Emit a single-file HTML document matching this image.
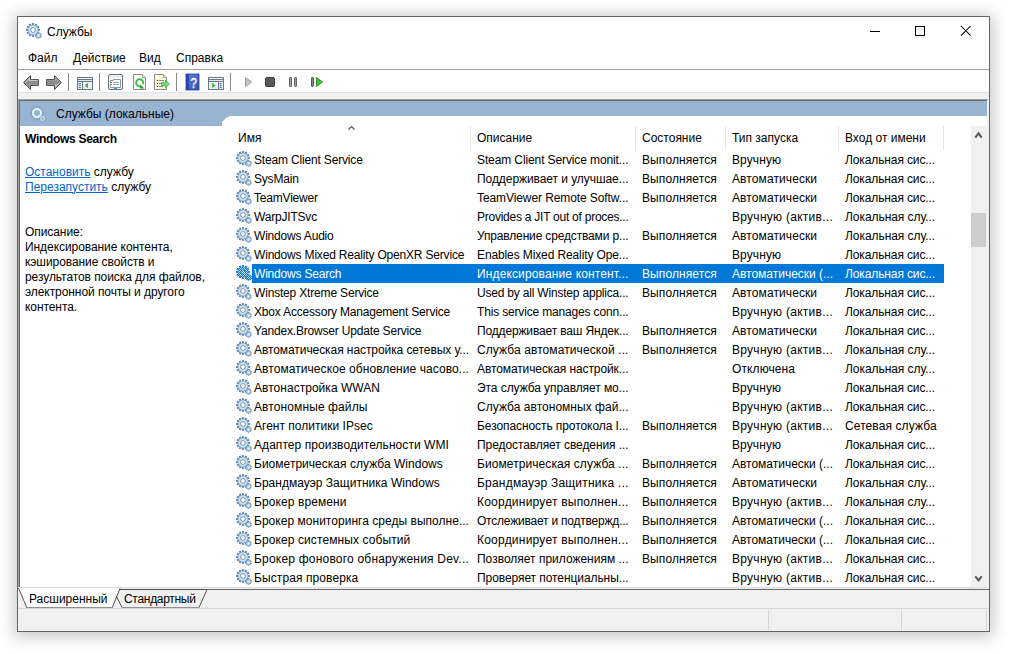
<!DOCTYPE html>
<html><head><meta charset="utf-8">
<style>
html,body{margin:0;padding:0;width:1011px;height:654px;overflow:hidden;background:#fff;}
*{box-sizing:border-box;}
body{font-family:"Liberation Sans",sans-serif;font-size:12px;color:#000;position:relative;}
.a{position:absolute;}
.t{position:absolute;white-space:nowrap;line-height:15px;}
#win{position:absolute;left:17px;top:16px;width:973px;height:616px;border:1px solid #646464;background:#fff;
 box-shadow:0 2px 15px 3px rgba(0,0,0,0.22);}
.hl{position:absolute;height:1px;}
.vl{position:absolute;width:1px;}
.row{position:absolute;left:0;width:1011px;height:19px;}
.row .c{position:absolute;white-space:nowrap;line-height:19px;top:1px;}
.row.sel{color:#fff;}
.row.sel:before{content:"";position:absolute;left:252px;top:0;width:692px;height:19px;background:#0078d7;}
.gi{position:absolute;top:1px;width:16px;height:16px;}
a,.lnk{color:#0066cc;text-decoration:underline;}

</style></head><body>
<svg width="0" height="0" style="position:absolute">
<defs>
<pattern id="dith" width="2" height="2" patternUnits="userSpaceOnUse"><rect x="0" y="0" width="1" height="1" fill="#0078d7"/><rect x="1" y="1" width="1" height="1" fill="#0078d7"/></pattern>
<radialGradient id="ring" cx="0.5" cy="0.5" r="0.5"><stop offset="0.45" stop-color="#e6f7fd"/><stop offset="0.78" stop-color="#bfe1f4"/><stop offset="1" stop-color="#7b9ec2"/></radialGradient>
<mask id="gmask" maskUnits="userSpaceOnUse" x="0" y="0" width="16" height="16"><g fill="#fff"><rect x="5.9" y="0.1" width="2.2" height="2.6" transform="rotate(0 7 7)"/><rect x="5.9" y="0.1" width="2.2" height="2.6" transform="rotate(30 7 7)"/><rect x="5.9" y="0.1" width="2.2" height="2.6" transform="rotate(60 7 7)"/><rect x="5.9" y="0.1" width="2.2" height="2.6" transform="rotate(90 7 7)"/><rect x="5.9" y="0.1" width="2.2" height="2.6" transform="rotate(120 7 7)"/><rect x="5.9" y="0.1" width="2.2" height="2.6" transform="rotate(150 7 7)"/><rect x="5.9" y="0.1" width="2.2" height="2.6" transform="rotate(180 7 7)"/><rect x="5.9" y="0.1" width="2.2" height="2.6" transform="rotate(210 7 7)"/><rect x="5.9" y="0.1" width="2.2" height="2.6" transform="rotate(240 7 7)"/><rect x="5.9" y="0.1" width="2.2" height="2.6" transform="rotate(270 7 7)"/><rect x="5.9" y="0.1" width="2.2" height="2.6" transform="rotate(300 7 7)"/><rect x="5.9" y="0.1" width="2.2" height="2.6" transform="rotate(330 7 7)"/><circle cx="7" cy="7" r="5.3"/><rect x="11.95" y="9.3" width="1.1" height="1.5" transform="rotate(0 12.5 12.5)"/><rect x="11.95" y="9.3" width="1.1" height="1.5" transform="rotate(36 12.5 12.5)"/><rect x="11.95" y="9.3" width="1.1" height="1.5" transform="rotate(72 12.5 12.5)"/><rect x="11.95" y="9.3" width="1.1" height="1.5" transform="rotate(108 12.5 12.5)"/><rect x="11.95" y="9.3" width="1.1" height="1.5" transform="rotate(144 12.5 12.5)"/><rect x="11.95" y="9.3" width="1.1" height="1.5" transform="rotate(180 12.5 12.5)"/><rect x="11.95" y="9.3" width="1.1" height="1.5" transform="rotate(216 12.5 12.5)"/><rect x="11.95" y="9.3" width="1.1" height="1.5" transform="rotate(252 12.5 12.5)"/><rect x="11.95" y="9.3" width="1.1" height="1.5" transform="rotate(288 12.5 12.5)"/><rect x="11.95" y="9.3" width="1.1" height="1.5" transform="rotate(324 12.5 12.5)"/><circle cx="12.5" cy="12.5" r="2.6"/></g></mask>
<g id="gear">
 <g fill="#6688ae"><rect x="5.9" y="0.1" width="2.2" height="2.6" transform="rotate(0 7 7)"/><rect x="5.9" y="0.1" width="2.2" height="2.6" transform="rotate(30 7 7)"/><rect x="5.9" y="0.1" width="2.2" height="2.6" transform="rotate(60 7 7)"/><rect x="5.9" y="0.1" width="2.2" height="2.6" transform="rotate(90 7 7)"/><rect x="5.9" y="0.1" width="2.2" height="2.6" transform="rotate(120 7 7)"/><rect x="5.9" y="0.1" width="2.2" height="2.6" transform="rotate(150 7 7)"/><rect x="5.9" y="0.1" width="2.2" height="2.6" transform="rotate(180 7 7)"/><rect x="5.9" y="0.1" width="2.2" height="2.6" transform="rotate(210 7 7)"/><rect x="5.9" y="0.1" width="2.2" height="2.6" transform="rotate(240 7 7)"/><rect x="5.9" y="0.1" width="2.2" height="2.6" transform="rotate(270 7 7)"/><rect x="5.9" y="0.1" width="2.2" height="2.6" transform="rotate(300 7 7)"/><rect x="5.9" y="0.1" width="2.2" height="2.6" transform="rotate(330 7 7)"/></g>
 <circle cx="7" cy="7" r="5.3" fill="url(#ring)"/>
 <circle cx="7" cy="7" r="2.7" fill="#6c7d93"/>
 <circle cx="7" cy="7" r="1.9" fill="#fff"/>
 <g fill="#6d90b6"><rect x="11.95" y="9.3" width="1.1" height="1.5" transform="rotate(0 12.5 12.5)"/><rect x="11.95" y="9.3" width="1.1" height="1.5" transform="rotate(36 12.5 12.5)"/><rect x="11.95" y="9.3" width="1.1" height="1.5" transform="rotate(72 12.5 12.5)"/><rect x="11.95" y="9.3" width="1.1" height="1.5" transform="rotate(108 12.5 12.5)"/><rect x="11.95" y="9.3" width="1.1" height="1.5" transform="rotate(144 12.5 12.5)"/><rect x="11.95" y="9.3" width="1.1" height="1.5" transform="rotate(180 12.5 12.5)"/><rect x="11.95" y="9.3" width="1.1" height="1.5" transform="rotate(216 12.5 12.5)"/><rect x="11.95" y="9.3" width="1.1" height="1.5" transform="rotate(252 12.5 12.5)"/><rect x="11.95" y="9.3" width="1.1" height="1.5" transform="rotate(288 12.5 12.5)"/><rect x="11.95" y="9.3" width="1.1" height="1.5" transform="rotate(324 12.5 12.5)"/></g>
 <circle cx="12.5" cy="12.5" r="2.4" fill="#b8d6ec" stroke="#7597bf" stroke-width="0.7"/>
 <circle cx="12.5" cy="12.5" r="0.8" fill="#fff"/>
</g>
<g id="gears">
 <use href="#gear"/>
 <rect x="0" y="0" width="16" height="16" fill="url(#dith)" mask="url(#gmask)"/>
</g>
<g id="gearh">
 <g fill="#7390b5" opacity="0.75"><rect x="5.9" y="0.3" width="2.2" height="2.4" transform="rotate(0 7 7)"/><rect x="5.9" y="0.3" width="2.2" height="2.4" transform="rotate(30 7 7)"/><rect x="5.9" y="0.3" width="2.2" height="2.4" transform="rotate(60 7 7)"/><rect x="5.9" y="0.3" width="2.2" height="2.4" transform="rotate(90 7 7)"/><rect x="5.9" y="0.3" width="2.2" height="2.4" transform="rotate(120 7 7)"/><rect x="5.9" y="0.3" width="2.2" height="2.4" transform="rotate(150 7 7)"/><rect x="5.9" y="0.3" width="2.2" height="2.4" transform="rotate(180 7 7)"/><rect x="5.9" y="0.3" width="2.2" height="2.4" transform="rotate(210 7 7)"/><rect x="5.9" y="0.3" width="2.2" height="2.4" transform="rotate(240 7 7)"/><rect x="5.9" y="0.3" width="2.2" height="2.4" transform="rotate(270 7 7)"/><rect x="5.9" y="0.3" width="2.2" height="2.4" transform="rotate(300 7 7)"/><rect x="5.9" y="0.3" width="2.2" height="2.4" transform="rotate(330 7 7)"/></g>
 <circle cx="7" cy="7" r="4.0" fill="none" stroke="#d9f2fc" stroke-width="2.4"/>
 <circle cx="7" cy="7" r="2.6" fill="none" stroke="#8c95a3" stroke-width="0.7" stroke-dasharray="0.8 0.6"/>
 <g fill="#6d8bb2" opacity="0.8"><rect x="12.05" y="9.4" width="0.9" height="1.3" transform="rotate(0 12.5 12.5)"/><rect x="12.05" y="9.4" width="0.9" height="1.3" transform="rotate(36 12.5 12.5)"/><rect x="12.05" y="9.4" width="0.9" height="1.3" transform="rotate(72 12.5 12.5)"/><rect x="12.05" y="9.4" width="0.9" height="1.3" transform="rotate(108 12.5 12.5)"/><rect x="12.05" y="9.4" width="0.9" height="1.3" transform="rotate(144 12.5 12.5)"/><rect x="12.05" y="9.4" width="0.9" height="1.3" transform="rotate(180 12.5 12.5)"/><rect x="12.05" y="9.4" width="0.9" height="1.3" transform="rotate(216 12.5 12.5)"/><rect x="12.05" y="9.4" width="0.9" height="1.3" transform="rotate(252 12.5 12.5)"/><rect x="12.05" y="9.4" width="0.9" height="1.3" transform="rotate(288 12.5 12.5)"/><rect x="12.05" y="9.4" width="0.9" height="1.3" transform="rotate(324 12.5 12.5)"/></g>
 <circle cx="12.5" cy="12.5" r="1.9" fill="none" stroke="#cde5f3" stroke-width="1.1"/>
</g>
</defs>
</svg>
<div id="win"></div>
<!-- title -->
<svg class="a" style="left:26px;top:23px;width:16px;height:16px"><use href="#gear"/></svg>
<div class="t" style="left:47px;top:24.5px;">Службы</div>
<svg class="a" style="left:865px;top:25px;width:120px;height:14px">
 <rect x="5" y="6" width="10" height="1" fill="#000"/>
 <rect x="50.5" y="1.5" width="9" height="9" fill="none" stroke="#000"/>
 <path d="M96 1 L105.6 10.6 M105.6 1 L96 10.6" stroke="#000" stroke-width="1.05"/>
</svg>
<!-- menu -->
<div class="t" style="left:28px;top:50.5px;">Файл</div>
<div class="t" style="left:73px;top:50.5px;">Действие</div>
<div class="t" style="left:139px;top:50.5px;">Вид</div>
<div class="t" style="left:176px;top:50.5px;">Справка</div>
<div class="hl" style="left:18px;top:69px;width:971px;background:#a0a0a0;"></div>
<!-- toolbar -->
<div class="hl" style="left:18px;top:92px;width:971px;background:#e3e3e3;"></div>
<div class="a" style="left:18px;top:93px;width:971px;height:6px;background:#f0f0f0;"></div>
<svg class="a" style="left:0;top:0;width:1011px;height:100px" viewBox="0 0 1011 100">
 <defs>
  <linearGradient id="arrG" x1="0" y1="0" x2="0" y2="1"><stop offset="0" stop-color="#b9b9b9"/><stop offset="0.5" stop-color="#8a8a8a"/><stop offset="1" stop-color="#a8a8a8"/></linearGradient>
  <linearGradient id="helpG" x1="0" y1="0" x2="1" y2="1"><stop offset="0" stop-color="#5a7fe0"/><stop offset="1" stop-color="#3552b8"/></linearGradient>
 </defs>
 <!-- back / forward -->
 <path d="M23.5 82.5 L30.5 75.5 L30.5 79.5 L38.5 79.5 L38.5 85.5 L30.5 85.5 L30.5 89.5 Z" fill="url(#arrG)" stroke="#555" stroke-width="1" stroke-linejoin="round"/>
 <path d="M25.5 82.5 L29.5 78.5 L29.5 80.5 L37.5 80.5" fill="none" stroke="#e8e8e8" stroke-width="0.8" opacity="0.8"/>
 <path d="M61.5 82.5 L54.5 75.5 L54.5 79.5 L46.5 79.5 L46.5 85.5 L54.5 85.5 L54.5 89.5 Z" fill="url(#arrG)" stroke="#555" stroke-width="1" stroke-linejoin="round"/>
 <path d="M59.5 82.5 L55.5 86.5 L55.5 84.5" fill="none" stroke="#e8e8e8" stroke-width="0.8" opacity="0.8"/>
 <!-- separators -->
 <rect x="68" y="73" width="1" height="18" fill="#8a8a8a"/>
 <rect x="99" y="73" width="1" height="18" fill="#8a8a8a"/>
 <rect x="176" y="73" width="1" height="18" fill="#8a8a8a"/>
 <rect x="230" y="73" width="1" height="18" fill="#8a8a8a"/>
  <!-- console tree icon -->
 <rect x="77.5" y="77.5" width="15" height="12" fill="#fff" stroke="#6b7583" stroke-width="1"/>
 <rect x="78" y="78" width="10" height="1" fill="#f4f6f8"/>
 <rect x="89" y="78" width="1" height="1" fill="#fff"/><rect x="91" y="78" width="1" height="1" fill="#fff"/>
 <rect x="78" y="79" width="14" height="1" fill="#6b7583"/>
 <rect x="78" y="80" width="14" height="1" fill="#e4e8ed"/>
 <rect x="78" y="81" width="14" height="1" fill="#6b7583"/>
 <rect x="82" y="82" width="1" height="7" fill="#6b7583"/>
 <rect x="78" y="82" width="4" height="7" fill="#fff"/>
 <rect x="78.5" y="83" width="2.5" height="1.3" rx="0.6" fill="#3b7dd0"/><rect x="78.5" y="85" width="2.5" height="1.3" rx="0.6" fill="#3b7dd0"/><rect x="78.5" y="87" width="2.5" height="1.3" rx="0.6" fill="#3b7dd0"/>
 <rect x="83" y="82" width="9" height="7" fill="#f0f0f0"/>
 <path d="M84.8 85.5 L88 82.8 L88 88.2 Z" fill="#2fb52f"/>
<!-- properties icon -->
 <rect x="108.5" y="74.5" width="14" height="15" rx="1.5" fill="#f7f8fa" stroke="#6a6f76" stroke-width="1"/>
 <rect x="109" y="76" width="13" height="1" fill="#dfe6ee"/>
 <path d="M110.5 80.5 L113.5 80.5 L113.5 79.5 L120.5 79.5 L120.5 87.5 L110.5 87.5 Z" fill="#fff" stroke="#8a97a6" stroke-width="1"/>
 <rect x="111" y="82" width="1" height="1" fill="#2a8ae0"/><rect x="113" y="82" width="6" height="1" fill="#9aa2aa"/>
 <rect x="111" y="84" width="1" height="1" fill="#888"/><rect x="113" y="84" width="6" height="1" fill="#9aa2aa"/>
 <rect x="114" y="88" width="3" height="1.5" fill="#2ea0f0"/>
 <!-- refresh icon -->
 <path d="M133.5 74.5 L142.5 74.5 L145.5 77.5 L145.5 89.5 L133.5 89.5 Z" fill="#fbfbfb" stroke="#8c8c8c" stroke-width="1"/>
 <path d="M142.5 74.5 L142.5 77.5 L145.5 77.5" fill="#e8e8e8" stroke="#8c8c8c" stroke-width="0.8"/>
 <path d="M142.9 84.2 A3.6 3.6 0 1 0 140.7 86.2" fill="none" stroke="#3cbf3c" stroke-width="1.9"/>
 <path d="M140 84.5 L144.5 88.5 L140 88.5 Z" fill="#2a9f2a"/>
 <!-- export list -->
 <path d="M154.5 74.5 L163.5 74.5 L166.5 77.5 L166.5 89.5 L154.5 89.5 Z" fill="#fdf7dc" stroke="#8c8c8c" stroke-width="1"/>
 <path d="M163.5 74.5 L163.5 77.5 L166.5 77.5" fill="#eee" stroke="#8c8c8c" stroke-width="0.8"/>
 <rect x="157" y="80" width="1" height="1" fill="#222"/><rect x="159" y="80" width="5" height="1" fill="#808890"/>
 <rect x="157" y="83" width="1" height="1" fill="#222"/><rect x="159" y="83" width="4" height="1" fill="#808890"/>
 <rect x="157" y="86" width="1" height="1" fill="#222"/><rect x="159" y="86" width="4" height="1" fill="#808890"/>
 <path d="M161.5 82.5 L165.5 82.5 L165.5 80 L169.5 84 L165.5 88 L165.5 85.5 L161.5 85.5 Z" fill="#7ad67a" stroke="#3fae3f" stroke-width="0.8"/>
 <!-- help -->
 <rect x="186" y="74" width="13" height="16" fill="url(#helpG)"/>
 <rect x="186" y="74" width="3" height="16" fill="#2c48b0"/>
 <rect x="186" y="74" width="13" height="16" fill="none" stroke="#233a90" stroke-width="0.8"/>
 <text x="193.6" y="87.6" font-family="Liberation Sans" font-size="14.5" fill="#fff" text-anchor="middle" stroke="#fff" stroke-width="0.4" transform="translate(193.6 0) scale(0.78 1) translate(-193.6 0)">?</text>
  <!-- action pane -->
 <rect x="208.5" y="77.5" width="15" height="12" fill="#fff" stroke="#6b7583" stroke-width="1"/>
 <rect x="209" y="78" width="10" height="1" fill="#f4f6f8"/>
 <rect x="220" y="78" width="1" height="1" fill="#fff"/><rect x="222" y="78" width="1" height="1" fill="#fff"/>
 <rect x="209" y="79" width="14" height="1" fill="#6b7583"/>
 <rect x="209" y="80" width="14" height="1" fill="#e4e8ed"/>
 <rect x="209" y="81" width="14" height="1" fill="#6b7583"/>
 <rect x="218" y="82" width="1" height="7" fill="#6b7583"/>
 <rect x="209" y="82" width="9" height="7" fill="#f0f0f0"/>
 <rect x="219" y="82" width="4" height="7" fill="#fff"/>
 <rect x="219.5" y="83" width="2.5" height="1.3" rx="0.6" fill="#3b7dd0"/><rect x="219.5" y="85" width="2.5" height="1.3" rx="0.6" fill="#3b7dd0"/><rect x="219.5" y="87" width="2.5" height="1.3" rx="0.6" fill="#3b7dd0"/>
 <path d="M212.2 82.8 L215.4 85.5 L212.2 88.2 Z" fill="#2fb52f"/>
<!-- play disabled -->
 <path d="M245.5 77.5 L251.5 82 L245.5 86.5 Z" fill="#c4c4c4" stroke="#9a9a9a" stroke-width="1" stroke-linejoin="round"/>
 <!-- stop -->
 <rect x="265.5" y="77.5" width="9" height="9" rx="1.5" fill="#5a5a5a" stroke="#3c3c3c" stroke-width="1"/>
 <!-- pause -->
 <rect x="289.5" y="77.5" width="2" height="9" rx="0.6" fill="#9a9a9a" stroke="#666" stroke-width="1"/>
 <rect x="294.5" y="77.5" width="2" height="9" rx="0.6" fill="#9a9a9a" stroke="#666" stroke-width="1"/>
 <!-- restart -->
 <rect x="311.5" y="77.5" width="2" height="9" rx="0.6" fill="#8a8a8a" stroke="#555" stroke-width="1"/>
 <path d="M316.5 77.5 L322.5 82 L316.5 86.5 Z" fill="#3cc43c" stroke="#2a9a2a" stroke-width="1" stroke-linejoin="round"/>
</svg>

<!-- MMC pane frame -->
<div class="a" style="left:18px;top:99px;width:971px;height:532px;background:#f0f0f0;"></div>
<div class="hl" style="left:18px;top:99px;width:970px;background:#a0a0a0;"></div>
<div class="hl" style="left:19px;top:100px;width:968px;background:#696969;"></div>
<div class="vl" style="left:18px;top:99px;height:488px;background:#a0a0a0;"></div>
<div class="vl" style="left:19px;top:100px;height:487px;background:#696969;"></div>
<div class="a" style="left:20px;top:101px;width:967px;height:487px;background:#fff;"></div>
<!-- blue header -->
<div class="a" style="left:20px;top:101px;width:967px;height:25px;background:#99b4d1;"></div>
<div class="a" style="left:222px;top:116px;width:765px;height:10px;background:#fff;clip-path:polygon(0 6px,1px 5px,4px 2px,6px 1px,8px 0,100% 0,100% 100%,0 100%);"></div>
<svg class="a" style="left:30px;top:106px;width:16px;height:16px"><use href="#gearh"/></svg>
<div class="t" style="left:56px;top:106.5px;">Службы (локальные)</div>
<!-- left panel -->
<div class="t" style="left:25px;top:131.5px;font-weight:bold;letter-spacing:-0.3px">Windows Search</div>
<div class="t" style="left:25px;top:164.5px;"><span class="lnk">Остановить</span> службу</div>
<div class="t" style="left:25px;top:179.5px;"><span class="lnk">Перезапустить</span> службу</div>
<div class="t" style="left:25px;top:224.5px;line-height:15px;letter-spacing:-0.07px">Описание:<br>Индексирование контента,<br>кэширование свойств и<br>результатов поиска для файлов,<br>электронной почты и другого<br>контента.</div>
<!-- list header -->
<div class="t" style="left:238px;top:130.5px;">Имя</div>
<div class="t" style="left:477px;top:130.5px">Описание</div>
<div class="t" style="left:642px;top:130.5px">Состояние</div>
<div class="t" style="left:732px;top:130.5px">Тип запуска</div>
<div class="t" style="left:845px;top:130.5px">Вход от имени</div>
<div class="vl" style="left:470px;top:126px;height:24px;background:#e5e5e5;"></div>
<div class="vl" style="left:635px;top:126px;height:24px;background:#e5e5e5;"></div>
<div class="vl" style="left:725px;top:126px;height:24px;background:#e5e5e5;"></div>
<div class="vl" style="left:838px;top:126px;height:24px;background:#e5e5e5;"></div>
<div class="vl" style="left:943px;top:126px;height:24px;background:#e5e5e5;"></div>
<svg class="a" style="left:346px;top:124px;width:12px;height:8px"><path d="M2.5 5.5 L5.5 2.5 L8.5 5.5" fill="none" stroke="#505050" stroke-width="1.1"/></svg>
<!-- scrollbar -->
<div class="a" style="left:971px;top:126px;width:16px;height:461px;background:#f0f0f0;"></div>
<div class="a" style="left:971px;top:213px;width:15px;height:34px;background:#cdcdcd;"></div>
<svg class="a" style="left:971px;top:126px;width:16px;height:17px"><path d="M4.3 11.7 L7.5 7.3 L10.7 11.7" fill="none" stroke="#5a5a5a" stroke-width="2"/></svg>
<svg class="a" style="left:971px;top:570px;width:16px;height:17px"><path d="M4.3 6.3 L7.5 10.3 L10.7 6.3" fill="none" stroke="#5a5a5a" stroke-width="2"/></svg>
<!-- tabs -->
<div class="hl" style="left:20px;top:587px;width:967px;background:#dcdcdc;"></div>
<svg class="a" style="left:18px;top:588px;width:971px;height:21px">
 <rect x="0" y="0" width="971" height="21" fill="#f0f0f0"/>
 <path d="M95 1.5 L971 1.5" stroke="#696969" stroke-width="1"/>
 <path d="M0 20.5 L971 20.5" stroke="#d7d7d7" stroke-width="1"/>
 <path d="M95 1.5 L189 1.5 L181 19.5 L104 19.5 Z" fill="#f0f0f0"/>
 <path d="M95 1.5 L189 1.5 M189 1.5 L181 19.5 M95 1.5 L104 19.5" fill="none" stroke="#505050" stroke-width="1"/>
 <path d="M104 19.5 L181 19.5" stroke="#909090" stroke-width="1"/>
 <path d="M0 0 L102 0 L94 19.5 L8 19.5 Z" fill="#fff"/>
 <path d="M0.5 0 L8.5 19" stroke="#505050" stroke-width="1" fill="none"/>
 <path d="M94.5 19 L102 0.5" stroke="#505050" stroke-width="1" fill="none"/>
 <path d="M8 19.5 L95 19.5" stroke="#909090" stroke-width="1"/>
</svg>
<div class="t" style="left:29px;top:591.5px;">Расширенный</div>
<div class="t" style="left:124px;top:591.5px;letter-spacing:-0.3px">Стандартный</div>
<!-- status bar -->
<div class="vl" style="left:768px;top:610px;height:20px;background:#d5d5d5;"></div>
<div class="vl" style="left:901px;top:610px;height:20px;background:#d5d5d5;"></div>
<div class="vl" style="left:986px;top:610px;height:20px;background:#d5d5d5;"></div>
<div id="list">
<div class="row" style="top:150px"><svg class="gi" style="left:236px"><use href="#gear"/></svg><div class="c" style="left:254px;letter-spacing:-0.168px">Steam Client Service</div><div class="c" style="left:477px;letter-spacing:-0.112px">Steam Client Service monit...</div><div class="c" style="left:642px;letter-spacing:0.101px">Выполняется</div><div class="c" style="left:732px;letter-spacing:0.104px">Вручную</div><div class="c" style="left:845px;letter-spacing:-0.114px">Локальная сис...</div></div>
<div class="row" style="top:169px"><svg class="gi" style="left:236px"><use href="#gear"/></svg><div class="c" style="left:254px;letter-spacing:-0.197px">SysMain</div><div class="c" style="left:477px;letter-spacing:-0.066px">Поддерживает и улучшае...</div><div class="c" style="left:642px;letter-spacing:0.101px">Выполняется</div><div class="c" style="left:732px;letter-spacing:0.097px">Автоматически</div><div class="c" style="left:845px;letter-spacing:-0.114px">Локальная сис...</div></div>
<div class="row" style="top:188px"><svg class="gi" style="left:236px"><use href="#gear"/></svg><div class="c" style="left:254px;letter-spacing:-0.197px">TeamViewer</div><div class="c" style="left:477px;letter-spacing:-0.090px">TeamViewer Remote Softw...</div><div class="c" style="left:642px;letter-spacing:0.101px">Выполняется</div><div class="c" style="left:732px;letter-spacing:0.097px">Автоматически</div><div class="c" style="left:845px;letter-spacing:-0.114px">Локальная сис...</div></div>
<div class="row" style="top:207px"><svg class="gi" style="left:236px"><use href="#gear"/></svg><div class="c" style="left:254px;letter-spacing:-0.195px">WarpJITSvc</div><div class="c" style="left:477px;letter-spacing:-0.248px">Provides a JIT out of proces...</div><div class="c" style="left:732px;letter-spacing:0.271px">Вручную (актив...</div><div class="c" style="left:845px;letter-spacing:-0.059px">Локальная слу...</div></div>
<div class="row" style="top:226px"><svg class="gi" style="left:236px"><use href="#gear"/></svg><div class="c" style="left:254px;letter-spacing:-0.189px">Windows Audio</div><div class="c" style="left:477px;letter-spacing:-0.154px">Управление средствами р...</div><div class="c" style="left:642px;letter-spacing:0.101px">Выполняется</div><div class="c" style="left:732px;letter-spacing:0.097px">Автоматически</div><div class="c" style="left:845px;letter-spacing:-0.059px">Локальная слу...</div></div>
<div class="row" style="top:245px"><svg class="gi" style="left:236px"><use href="#gear"/></svg><div class="c" style="left:254px;letter-spacing:-0.181px">Windows Mixed Reality OpenXR Service</div><div class="c" style="left:477px;letter-spacing:-0.116px">Enables Mixed Reality Ope...</div><div class="c" style="left:732px;letter-spacing:0.104px">Вручную</div><div class="c" style="left:845px;letter-spacing:-0.114px">Локальная сис...</div></div>
<div class="row sel" style="top:264px"><svg class="gi" style="left:236px"><use href="#gears"/></svg><div class="c" style="left:254px;letter-spacing:-0.193px">Windows Search</div><div class="c" style="left:477px;letter-spacing:0.134px">Индексирование контент...</div><div class="c" style="left:642px;letter-spacing:0.101px">Выполняется</div><div class="c" style="left:732px;letter-spacing:-0.013px">Автоматически (...</div><div class="c" style="left:845px;letter-spacing:-0.114px">Локальная сис...</div></div>
<div class="row" style="top:283px"><svg class="gi" style="left:236px"><use href="#gear"/></svg><div class="c" style="left:254px;letter-spacing:-0.176px">Winstep Xtreme Service</div><div class="c" style="left:477px;letter-spacing:-0.197px">Used by all Winstep applica...</div><div class="c" style="left:642px;letter-spacing:0.101px">Выполняется</div><div class="c" style="left:732px;letter-spacing:0.097px">Автоматически</div><div class="c" style="left:845px;letter-spacing:-0.114px">Локальная сис...</div></div>
<div class="row" style="top:302px"><svg class="gi" style="left:236px"><use href="#gear"/></svg><div class="c" style="left:254px;letter-spacing:-0.184px">Xbox Accessory Management Service</div><div class="c" style="left:477px;letter-spacing:-0.164px">This service manages conn...</div><div class="c" style="left:732px;letter-spacing:0.271px">Вручную (актив...</div><div class="c" style="left:845px;letter-spacing:-0.114px">Локальная сис...</div></div>
<div class="row" style="top:321px"><svg class="gi" style="left:236px"><use href="#gear"/></svg><div class="c" style="left:254px;letter-spacing:-0.178px">Yandex.Browser Update Service</div><div class="c" style="left:477px;letter-spacing:-0.149px">Поддерживает ваш Яндек...</div><div class="c" style="left:642px;letter-spacing:0.101px">Выполняется</div><div class="c" style="left:732px;letter-spacing:0.097px">Автоматически</div><div class="c" style="left:845px;letter-spacing:-0.114px">Локальная сис...</div></div>
<div class="row" style="top:340px"><svg class="gi" style="left:236px"><use href="#gear"/></svg><div class="c" style="left:254px;letter-spacing:-0.075px">Автоматическая настройка сетевых у...</div><div class="c" style="left:477px;letter-spacing:0.089px">Служба автоматической ...</div><div class="c" style="left:642px;letter-spacing:0.101px">Выполняется</div><div class="c" style="left:732px;letter-spacing:0.271px">Вручную (актив...</div><div class="c" style="left:845px;letter-spacing:-0.059px">Локальная слу...</div></div>
<div class="row" style="top:359px"><svg class="gi" style="left:236px"><use href="#gear"/></svg><div class="c" style="left:254px;letter-spacing:0.068px">Автоматическое обновление часово...</div><div class="c" style="left:477px;letter-spacing:-0.099px">Автоматическая настройк...</div><div class="c" style="left:732px;letter-spacing:0.104px">Отключена</div><div class="c" style="left:845px;letter-spacing:-0.059px">Локальная слу...</div></div>
<div class="row" style="top:378px"><svg class="gi" style="left:236px"><use href="#gear"/></svg><div class="c" style="left:254px;letter-spacing:0.031px">Автонастройка WWAN</div><div class="c" style="left:477px;letter-spacing:-0.072px">Эта служба управляет мо...</div><div class="c" style="left:732px;letter-spacing:0.104px">Вручную</div><div class="c" style="left:845px;letter-spacing:-0.114px">Локальная сис...</div></div>
<div class="row" style="top:397px"><svg class="gi" style="left:236px"><use href="#gear"/></svg><div class="c" style="left:254px;letter-spacing:0.105px">Автономные файлы</div><div class="c" style="left:477px;letter-spacing:0.030px">Служба автономных фай...</div><div class="c" style="left:732px;letter-spacing:0.271px">Вручную (актив...</div><div class="c" style="left:845px;letter-spacing:-0.114px">Локальная сис...</div></div>
<div class="row" style="top:416px"><svg class="gi" style="left:236px"><use href="#gear"/></svg><div class="c" style="left:254px;letter-spacing:0.015px">Агент политики IPsec</div><div class="c" style="left:477px;letter-spacing:-0.079px">Безопасность протокола I...</div><div class="c" style="left:642px;letter-spacing:0.101px">Выполняется</div><div class="c" style="left:732px;letter-spacing:0.271px">Вручную (актив...</div><div class="c" style="left:845px;letter-spacing:0.097px">Сетевая служба</div></div>
<div class="row" style="top:435px"><svg class="gi" style="left:236px"><use href="#gear"/></svg><div class="c" style="left:254px;letter-spacing:0.065px">Адаптер производительности WMI</div><div class="c" style="left:477px;letter-spacing:-0.082px">Предоставляет сведения ...</div><div class="c" style="left:732px;letter-spacing:0.104px">Вручную</div><div class="c" style="left:845px;letter-spacing:-0.114px">Локальная сис...</div></div>
<div class="row" style="top:454px"><svg class="gi" style="left:236px"><use href="#gear"/></svg><div class="c" style="left:254px;letter-spacing:0.022px">Биометрическая служба Windows</div><div class="c" style="left:477px;letter-spacing:0.079px">Биометрическая служба ...</div><div class="c" style="left:642px;letter-spacing:0.101px">Выполняется</div><div class="c" style="left:732px;letter-spacing:-0.013px">Автоматически (...</div><div class="c" style="left:845px;letter-spacing:-0.114px">Локальная сис...</div></div>
<div class="row" style="top:473px"><svg class="gi" style="left:236px"><use href="#gear"/></svg><div class="c" style="left:254px;letter-spacing:0.019px">Брандмауэр Защитника Windows</div><div class="c" style="left:477px;letter-spacing:0.209px">Брандмауэр Защитника ...</div><div class="c" style="left:642px;letter-spacing:0.101px">Выполняется</div><div class="c" style="left:732px;letter-spacing:0.097px">Автоматически</div><div class="c" style="left:845px;letter-spacing:-0.059px">Локальная слу...</div></div>
<div class="row" style="top:492px"><svg class="gi" style="left:236px"><use href="#gear"/></svg><div class="c" style="left:254px;letter-spacing:0.098px">Брокер времени</div><div class="c" style="left:477px;letter-spacing:0.224px">Координирует выполнен...</div><div class="c" style="left:642px;letter-spacing:0.101px">Выполняется</div><div class="c" style="left:732px;letter-spacing:0.271px">Вручную (актив...</div><div class="c" style="left:845px;letter-spacing:-0.059px">Локальная слу...</div></div>
<div class="row" style="top:511px"><svg class="gi" style="left:236px"><use href="#gear"/></svg><div class="c" style="left:254px;letter-spacing:0.029px">Брокер мониторинга среды выполне...</div><div class="c" style="left:477px;letter-spacing:-0.214px">Отслеживает и подтвержд...</div><div class="c" style="left:642px;letter-spacing:0.101px">Выполняется</div><div class="c" style="left:732px;letter-spacing:-0.013px">Автоматически (...</div><div class="c" style="left:845px;letter-spacing:-0.114px">Локальная сис...</div></div>
<div class="row" style="top:530px"><svg class="gi" style="left:236px"><use href="#gear"/></svg><div class="c" style="left:254px;letter-spacing:0.096px">Брокер системных событий</div><div class="c" style="left:477px;letter-spacing:0.224px">Координирует выполнен...</div><div class="c" style="left:642px;letter-spacing:0.101px">Выполняется</div><div class="c" style="left:732px;letter-spacing:-0.013px">Автоматически (...</div><div class="c" style="left:845px;letter-spacing:-0.114px">Локальная сис...</div></div>
<div class="row" style="top:549px"><svg class="gi" style="left:236px"><use href="#gear"/></svg><div class="c" style="left:254px;letter-spacing:0.205px">Брокер фонового обнаружения Dev...</div><div class="c" style="left:477px;letter-spacing:-0.004px">Позволяет приложениям ...</div><div class="c" style="left:642px;letter-spacing:0.101px">Выполняется</div><div class="c" style="left:732px;letter-spacing:0.271px">Вручную (актив...</div><div class="c" style="left:845px;letter-spacing:-0.114px">Локальная сис...</div></div>
<div class="row" style="top:568px"><svg class="gi" style="left:236px"><use href="#gear"/></svg><div class="c" style="left:254px;letter-spacing:0.096px">Быстрая проверка</div><div class="c" style="left:477px;letter-spacing:-0.074px">Проверяет потенциальны...</div><div class="c" style="left:732px;letter-spacing:0.271px">Вручную (актив...</div><div class="c" style="left:845px;letter-spacing:-0.114px">Локальная сис...</div></div>
</div>
</body></html>
